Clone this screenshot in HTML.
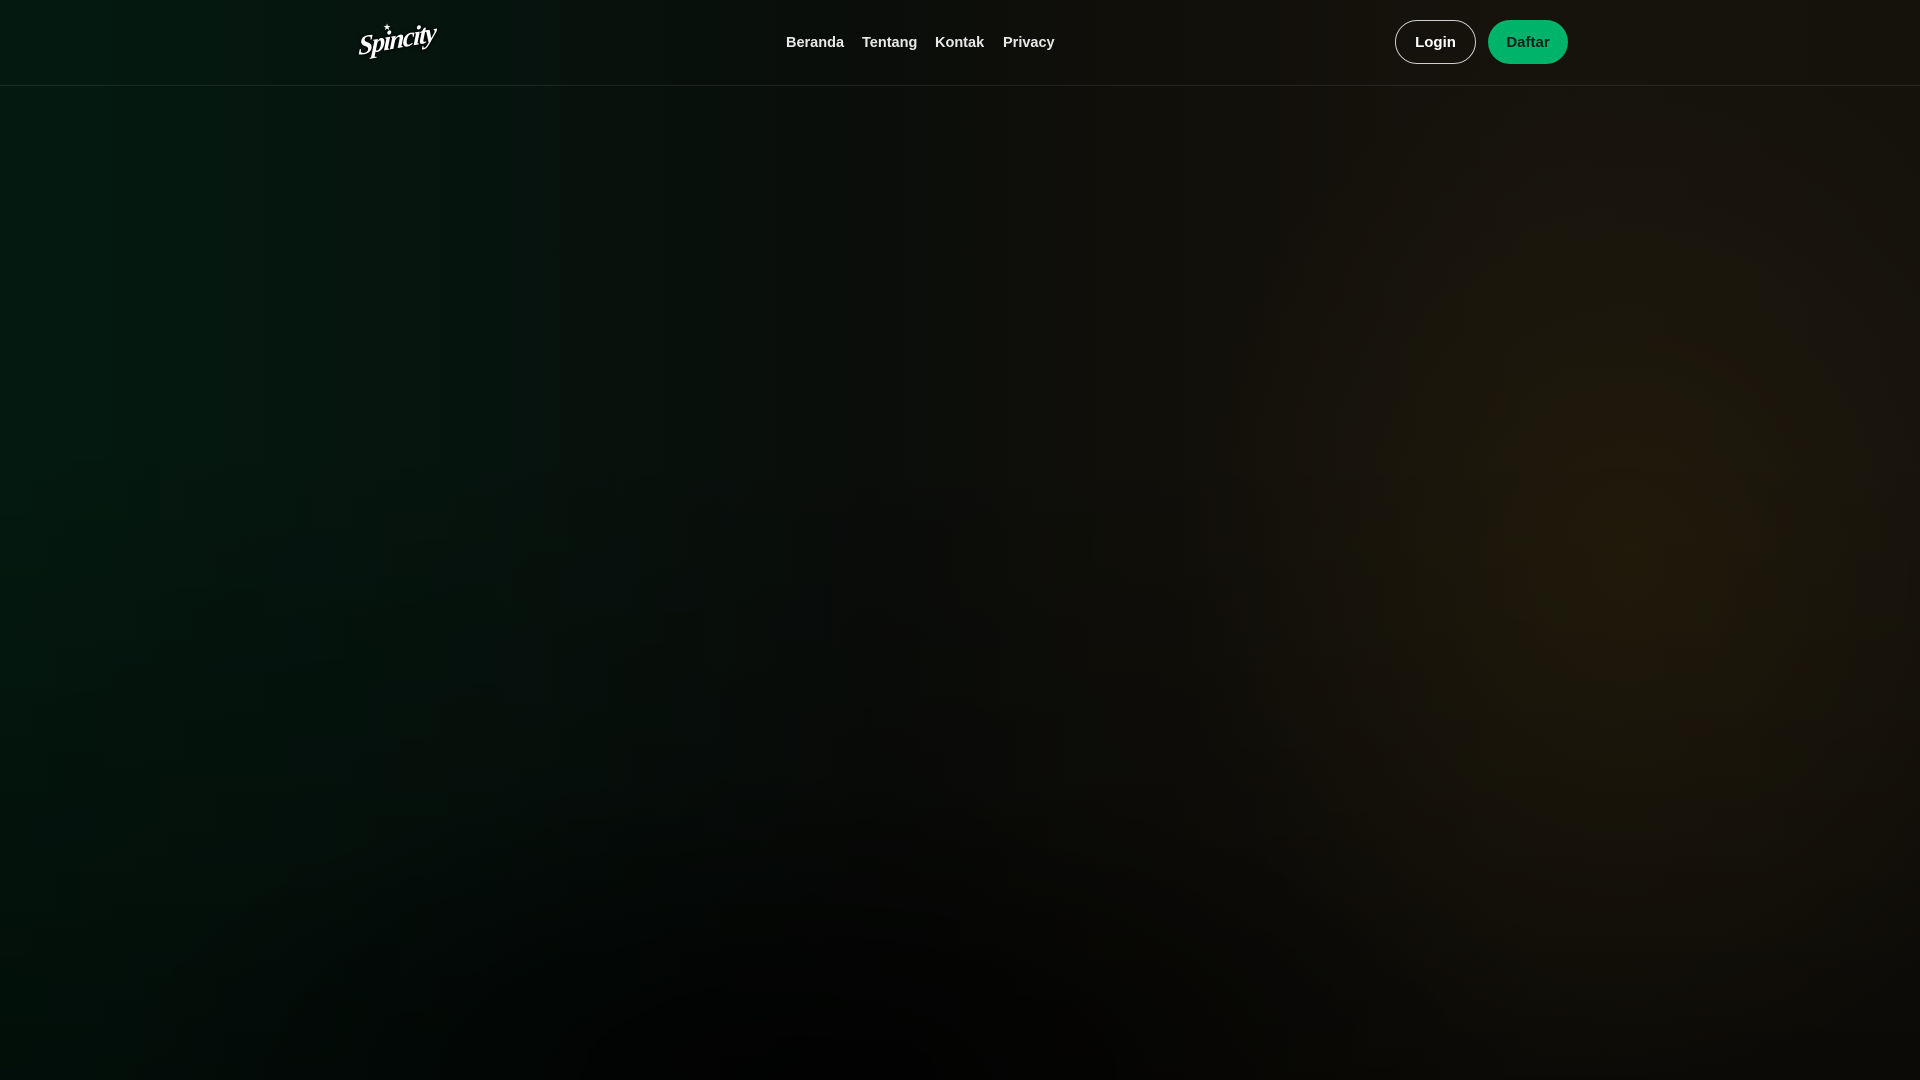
<!DOCTYPE html>
<html><head><meta charset="utf-8"><style>
*{margin:0;padding:0;box-sizing:border-box}
html,body{width:1920px;height:1080px;overflow:hidden}
body{font-family:"Liberation Sans",sans-serif;color:#fff;background:#0b0b08;position:relative}
.bg{position:absolute;inset:0;
background:
radial-gradient(ellipse 450px 520px at 1630px 560px, rgba(40,32,10,0.55), rgba(40,32,10,0) 100%),
radial-gradient(ellipse 700px 320px at 800px 1080px, rgba(0,0,0,0.8), rgba(0,0,0,0) 100%),
linear-gradient(180deg, rgba(0,0,0,0) 40%, rgba(0,0,0,0.45) 100%),
linear-gradient(90deg,#041a10 0%,#06140e 25%,#0a0d0a 45%,#110f0a 60%,#16130c 80%,#15120c 100%);}
header{position:absolute;left:0;top:0;width:1920px;height:86px;border-bottom:1px solid rgba(255,255,255,0.09)}
.logo{position:absolute;left:357px;top:20px;width:82px;height:42px}
.logo span{position:absolute;left:1px;top:4px;font-family:"Liberation Serif",serif;font-style:italic;font-weight:bold;font-size:27px;color:#fff;transform:rotate(-10deg) skewX(-12deg);letter-spacing:-1.5px;text-shadow:0 0 3px #000,0 0 2px #000}
.logo i{position:absolute;left:26px;top:2px;font-style:normal;font-size:9px}
nav a{position:absolute;top:34px;font-size:14.5px;font-weight:bold;color:#e8e8e8;text-decoration:none;line-height:18px}
.btn{position:absolute;top:20px;height:44px;border-radius:22px;font-size:15px;font-weight:bold;display:flex;align-items:center;justify-content:center}
.login{left:1395px;width:81px;border:1px solid #cfcfcf;color:#fff}
.daftar{left:1488px;width:80px;background:#00b36b;color:#06251a}
</style></head><body>
<div class="bg"></div>
<header>
<div class="logo"><span>Spincity</span><i>★</i></div>
<nav>
<a style="left:786px">Beranda</a>
<a style="left:862px">Tentang</a>
<a style="left:935px">Kontak</a>
<a style="left:1003px">Privacy</a>
</nav>
<div class="btn login">Login</div>
<div class="btn daftar">Daftar</div>
</header>
</body></html>
